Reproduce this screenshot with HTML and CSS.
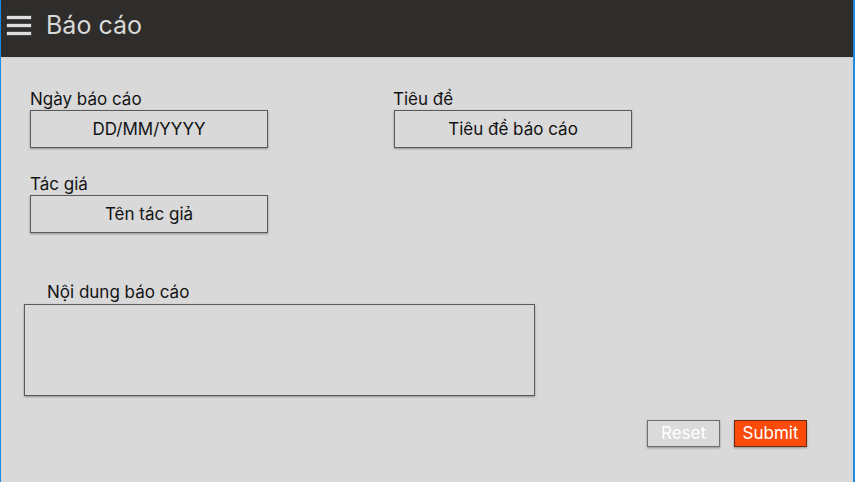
FILE: index.html
```html
<!DOCTYPE html>
<html lang="vi">
<head>
<meta charset="utf-8">
<title>Báo cáo</title>
<link rel="stylesheet" href="styles.css">
</head>
<body>
<div class="app">
  <header class="header">
    <svg class="menu" width="26" height="22" viewBox="0 0 26 22">
      <rect x="0.5" y="0.5" width="25" height="4" fill="#dedede" stroke="#1f1e1d" stroke-width="0.6"/>
      <rect x="0.5" y="8.5" width="25" height="4" fill="#dedede" stroke="#1f1e1d" stroke-width="0.6"/>
      <rect x="0.5" y="16.5" width="25" height="4" fill="#dedede" stroke="#1f1e1d" stroke-width="0.6"/>
    </svg>
    <h1 class="title">Báo cáo</h1>
  </header>
  <main class="main">
    <div class="fields">
      <div class="grid">
        <div class="field">
          <label class="label">Ngày báo cáo</label>
          <div class="input">DD/MM/YYYY</div>
        </div>
        <div class="field">
          <label class="label label-right">Tiêu đề</label>
          <div class="input">Tiêu đề báo cáo</div>
        </div>
        <div class="field">
          <label class="label">Tác giá</label>
          <div class="input">Tên tác giả</div>
        </div>
      </div>
    </div>
    <div class="content">
      <label class="label content-label">Nội dung báo cáo</label>
      <div class="textarea"></div>
    </div>
    <div class="actions">
      <button class="btn reset">Reset</button>
      <button class="btn submit">Submit</button>
    </div>
  </main>
</div>
</body>
</html>
```
FILE: styles.css
```css
* { box-sizing: border-box; }
html, body { margin: 0; padding: 0; }
body {
  font-family: Inter, "Noto Sans", "Liberation Sans", sans-serif;
  background: #d9d9d9;
}
.app {
  width: 855px;
  height: 482px;
  background: #d9d9d9;
  border-left: 1px solid #1b8be6;
  border-right: 2px solid #1b8be6;
  overflow: hidden;
}
.header {
  height: 58px;
  background: #2f2d2b;
  display: flex;
  align-items: center;
  padding-left: 5px;
  border-bottom: 1px solid #cfcfcf;
}
.menu { display: block; margin-top: -5px; }
.title {
  margin: 0 0 0 14px;
  font-weight: 400;
  font-size: 25px;
  color: #d9d9d9;
  line-height: 30px;
  margin-top: -7px;
}
.main {
  padding: 31px 0 0 23px;
}
.fields { padding-left: 6px; }
.grid {
  display: grid;
  grid-template-columns: 238px 238px;
  column-gap: 126px;
  row-gap: 26px;
}
.field {
  display: flex;
  flex-direction: column;
  gap: 1px;
}
.label {
  font-size: 17px;
  line-height: 20px;
  color: #141414;
}
.label-right { margin-left: -1px; }
.input {
  height: 38px;
  border: 1px solid #5a5a5a;
  background: #d9d9d9;
  box-shadow: 0 1px 2px rgba(0,0,0,0.35);
  display: flex;
  align-items: center;
  justify-content: center;
  font-size: 17px;
  color: #121212;
}
.content {
  margin-top: 49px;
  display: flex;
  flex-direction: column;
  gap: 2px;
}
.content-label { padding-left: 23px; }
.textarea {
  width: 511px;
  height: 92px;
  border: 1px solid #5a5a5a;
  box-shadow: 0 1px 2px rgba(0,0,0,0.35);
  background: #d9d9d9;
}
.actions {
  margin-top: 24px;
  display: flex;
  justify-content: flex-end;
  gap: 14px;
  padding-right: 46px;
}
.btn {
  width: 73px;
  height: 27px;
  font-family: inherit;
  font-size: 17px;
  line-height: 1;
  padding: 0;
  color: #ffffff;
  cursor: pointer;
  box-shadow: 0 1px 2px rgba(0,0,0,0.35);
}
.reset {
  background: #dadada;
  border: 1px solid #6e6e6e;
}
.submit {
  background: #fc4a0b;
  border: 1px solid #6a2a12;
}
```
